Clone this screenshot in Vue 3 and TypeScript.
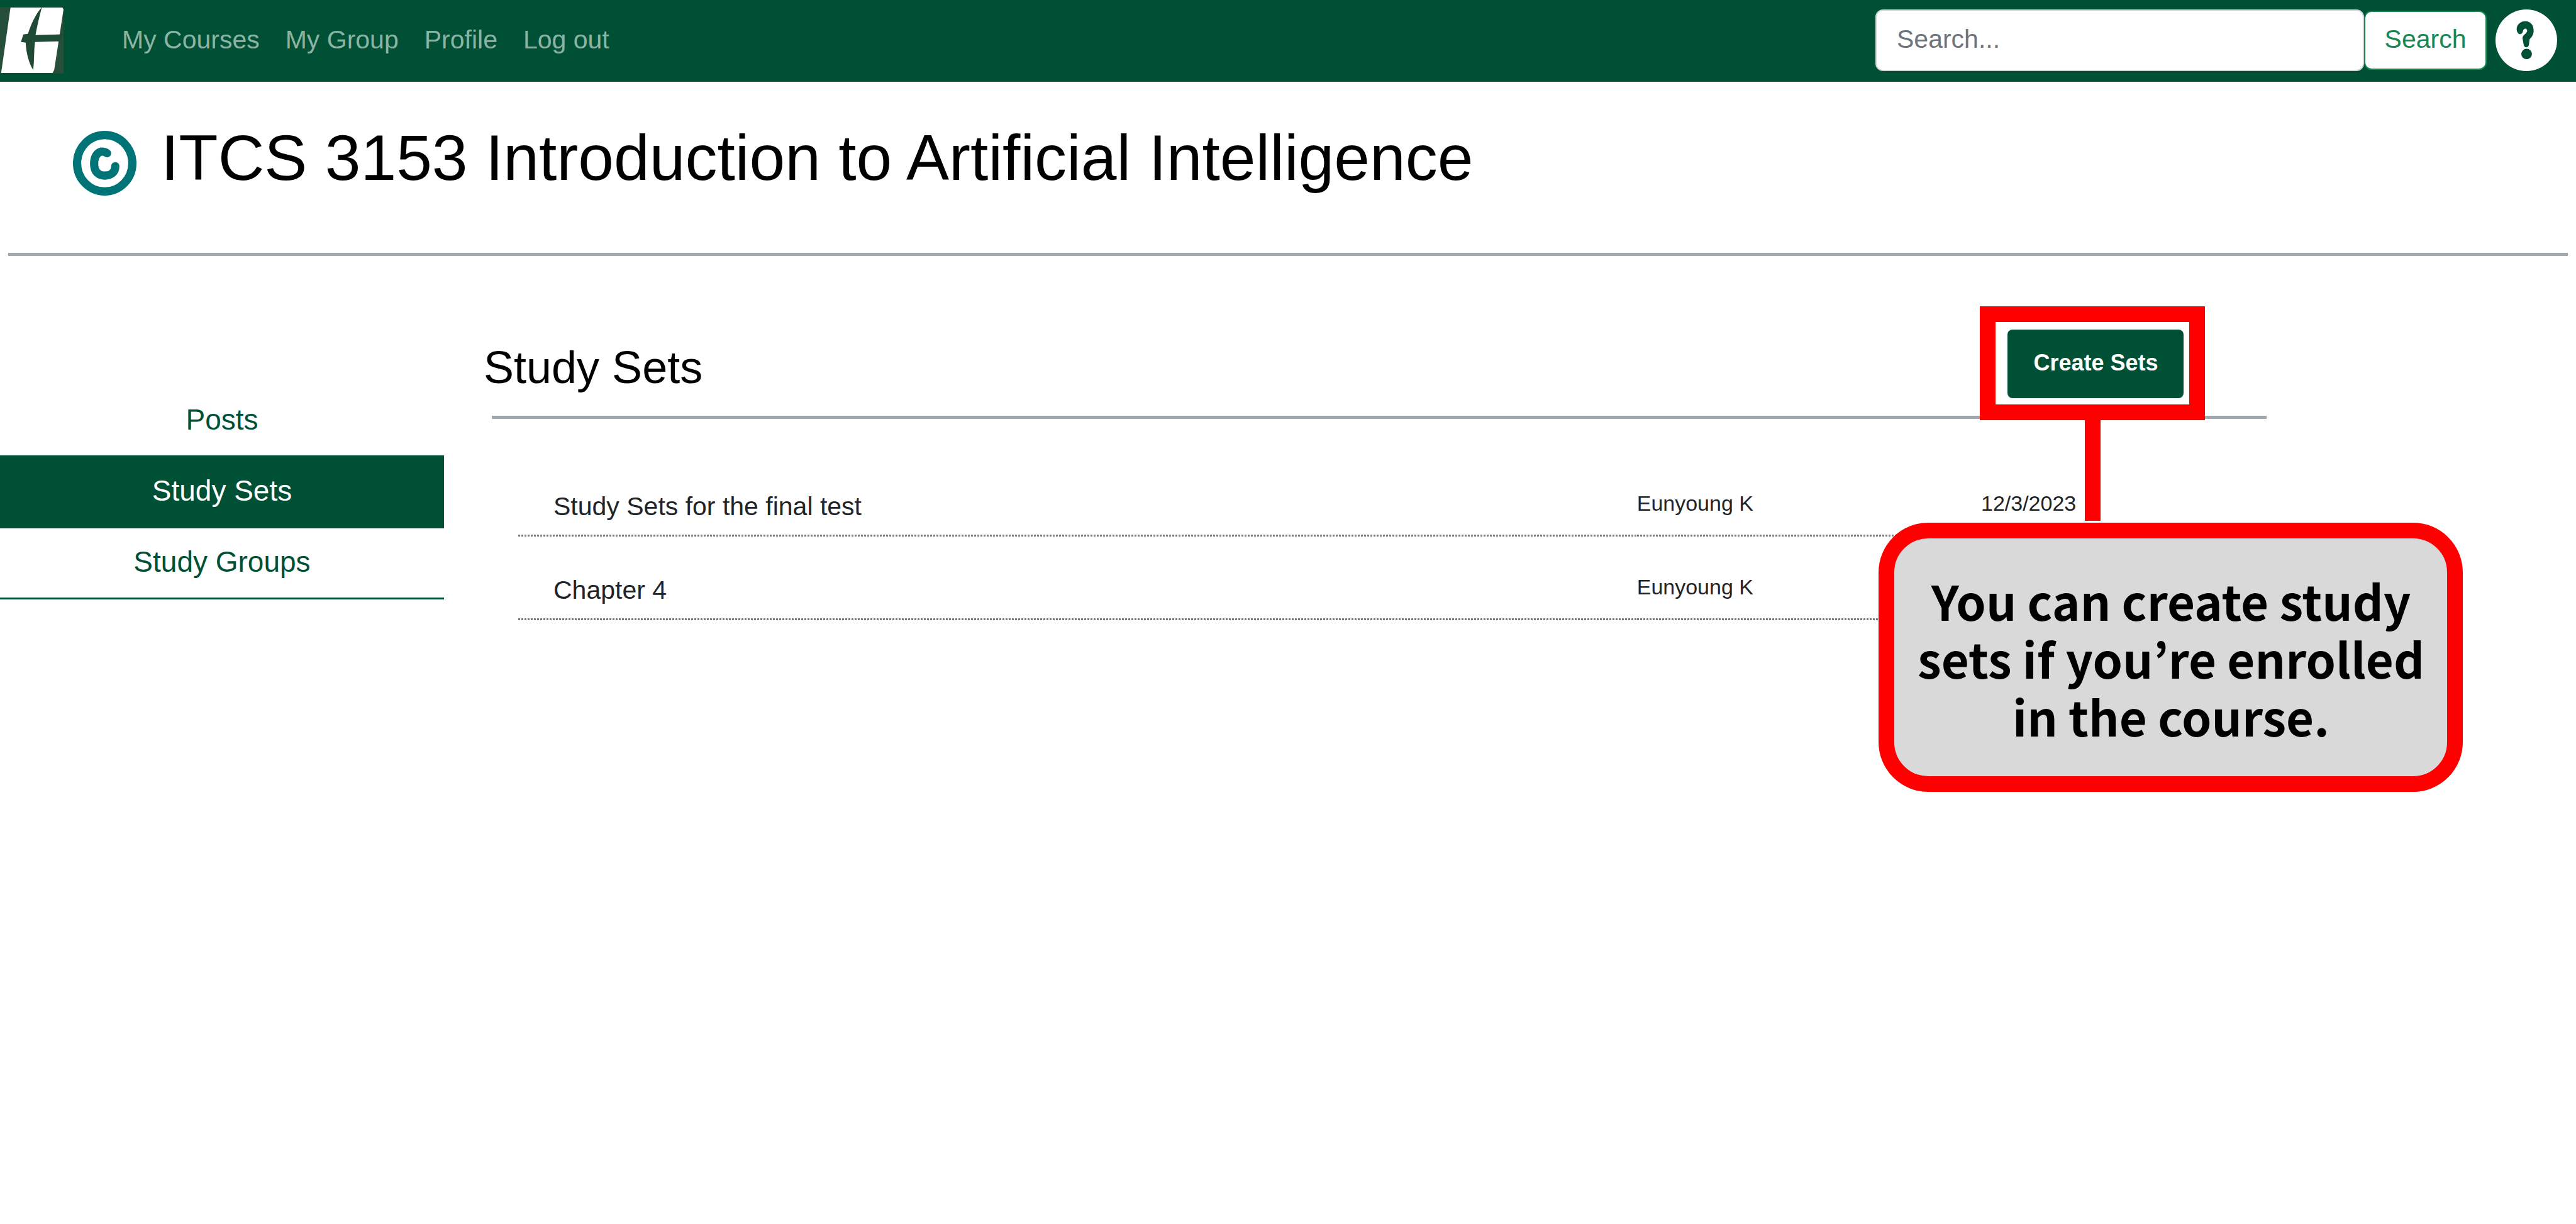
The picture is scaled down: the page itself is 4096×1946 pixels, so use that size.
<script setup lang="ts">
import { ref } from 'vue'

interface StudySet {
  title: string
  author: string
  date: string
}

const navLinks: string[] = ['My Courses', 'My Group', 'Profile', 'Log out']
const sections: string[] = ['Posts', 'Study Sets', 'Study Groups']
const activeSection = ref<string>('Study Sets')
const query = ref<string>('')

const studySets: StudySet[] = [
  { title: 'Study Sets for the final test', author: 'Eunyoung K', date: '12/3/2023' },
  { title: 'Chapter 4', author: 'Eunyoung K', date: '' },
]
</script>

<template>
  <div class="page">
    <header class="navbar">
      <a href="#" class="brand" aria-label="Home">
        <svg viewBox="0 0 109 114" aria-hidden="true">
          <rect width="109" height="114" fill="#254f3a" />
          <path d="M18 1H107L109 4L93 108L90 113H2Z" fill="#fff" />
          <path
            d="M72 0C61 12 53 30 48 46L40 47L36 60L44 61C45 80 50 97 57 108C59 92 58 76 60 60L99 59L103 60L109 46L102 47L61 48C64 32 67 18 72 0Z"
            fill="#1f4a36"
          />
        </svg>
      </a>
      <nav class="nav-links" aria-label="Main">
        <a v-for="link in navLinks" :key="link" href="#">{{ link }}</a>
      </nav>
      <form class="search" role="search" @submit.prevent>
        <input v-model="query" type="search" placeholder="Search..." aria-label="Search" />
        <button type="submit">Search</button>
      </form>
      <a href="#" class="help" aria-label="Help">
        <svg viewBox="0 0 105 105" aria-hidden="true">
          <circle cx="52.5" cy="52.5" r="52.5" fill="#fff" />
          <path
            d="M36 34C36 25 43 20 51 20C60 20 65 27 65 36C65 43 62 47 58 51L57 60C56 66 49 66 48 60L46 49C46 44 53 41 54 37C54 32 49 31 47 36C46 45 37 44 36 34Z"
            fill="#005035"
          />
          <circle cx="53" cy="76" r="9" fill="#005035" />
        </svg>
      </a>
    </header>

    <div class="course">
      <svg class="course-icon" viewBox="0 0 108 110" aria-hidden="true">
        <ellipse cx="54" cy="55" rx="47" ry="48" fill="none" stroke="#007377" stroke-width="14" />
        <path
          d="M58 38C46 30 36 40 36 56C36 70 44 76 54 76C65 76 72 70 72 60"
          fill="none"
          stroke="#007377"
          stroke-width="14"
          stroke-linecap="round"
        />
      </svg>
      <h1>ITCS 3153 Introduction to Artificial Intelligence</h1>
    </div>

    <div class="body">
      <nav class="sidebar" aria-label="Course sections">
        <a
          v-for="section in sections"
          :key="section"
          href="#"
          :class="{ active: section === activeSection }"
          @click.prevent="activeSection = section"
          >{{ section }}</a
        >
      </nav>

      <main class="content">
        <div class="content-head">
          <h2>Study Sets</h2>
          <div class="create">
            <button type="button">Create Sets</button>
            <span class="highlight"></span>
            <span class="connector"></span>
            <p class="callout">You can create study<br />sets if you’re enrolled<br />in the course.</p>
          </div>
        </div>
        <hr />
        <table>
          <tbody>
            <tr v-for="set in studySets" :key="set.title">
              <td class="title">{{ set.title }}</td>
              <td class="author">{{ set.author }}</td>
              <td class="date">{{ set.date }}</td>
            </tr>
          </tbody>
        </table>
      </main>
    </div>
  </div>
</template>

<style>
body {
  background: #fff;
}
</style>

<style scoped>
.page {
  min-height: 100vh;
  background: #fff;
  font-family: 'Liberation Sans', Arial, sans-serif;
  font-size: 41px;
  color: #212529;
}

.page *,
.page {
  box-sizing: border-box;
}

a {
  text-decoration: none;
}

button,
input {
  font: inherit;
  margin: 0;
}

svg {
  display: block;
  width: 100%;
  height: 100%;
}

.navbar {
  display: flex;
  align-items: center;
  height: 130px;
  padding: 0 30px 2px 0;
  background: #005035;
}

.brand {
  width: 101px;
  height: 106px;
}

.nav-links {
  display: flex;
  gap: 41px;
  margin-left: 93px;
  padding-bottom: 2px;
}

.nav-links a {
  line-height: 48px;
  color: #8cb4a4;
}

.search {
  display: flex;
  align-items: center;
  flex: 0 0 972px;
  margin-left: auto;
}

.search input {
  flex: 1;
  min-width: 0;
  height: 98px;
  padding: 0 32px 4px;
  border: 2px solid #ced4da;
  border-radius: 12px;
  background: #fff;
  color: #212529;
  appearance: none;
}

.search input::placeholder {
  color: #6c757d;
  opacity: 1;
}

.search button {
  width: 195px;
  height: 94px;
  padding: 0 0 4px;
  border: 2px solid #198754;
  border-radius: 12px;
  background: #fff;
  color: #198754;
}

.help {
  width: 98px;
  height: 98px;
  margin-left: 14px;
}

.course {
  display: flex;
  align-items: flex-end;
  gap: 39px;
  margin: 0 13px;
  padding: 61px 103px 91px;
  border-bottom: 5px solid #9fa8ad;
}

.course-icon {
  width: 101px;
  height: 103px;
}

h1,
h2 {
  margin: 0;
  font-weight: 400;
  color: #000;
}

h1 {
  font-size: 102px;
  line-height: 120px;
}

.body {
  display: flex;
  align-items: flex-start;
}

.sidebar {
  flex: 0 0 706px;
  margin-top: 207px;
}

.sidebar a {
  display: block;
  padding-bottom: 4px;
  border-bottom: 3px solid #005035;
  font-size: 46px;
  line-height: 106px;
  text-align: center;
  color: #005035;
}

.sidebar a.active {
  background: #005035;
  color: #fff;
}

.content {
  flex: 1;
  margin: 117px 12% 0 63px;
}

.content-head {
  display: flex;
  align-items: flex-start;
  justify-content: space-between;
  padding: 0 132px 28px 0;
}

h2 {
  margin-top: 17px;
  font-size: 72px;
  line-height: 86px;
}

.create {
  position: relative;
}

.create button {
  display: block;
  width: 280px;
  height: 109px;
  padding: 0 0 4px;
  border: 0;
  border-radius: 8px;
  background: #005035;
  color: #fff;
  font-size: 36px;
  font-weight: 700;
}

.highlight {
  position: absolute;
  inset: -37px -34px -35px -44px;
  border: 25px solid #f00;
}

.connector {
  position: absolute;
  top: 144px;
  left: 123px;
  width: 25px;
  height: 160px;
  background: #f00;
}

.callout {
  position: absolute;
  top: 307px;
  left: -205px;
  width: 929px;
  height: 428px;
  margin: 0;
  padding: 52px 0 0;
  border: 25px solid #f00;
  border-radius: 79px;
  background: #d9d9d9;
  color: #000;
  font-family: 'Noto Sans CJK KR', 'Noto Sans', sans-serif;
  font-size: 76px;
  font-weight: 700;
  line-height: 92px;
  text-align: center;
  white-space: nowrap;
}

hr {
  height: 5px;
  margin: 0 0 54px 13px;
  border: 0;
  background: #9fa8ad;
}

table {
  width: calc(100% - 99px);
  margin-left: 55px;
  border-collapse: collapse;
  table-layout: fixed;
}

td {
  height: 133px;
  padding: 55px 0 0;
  vertical-align: top;
  line-height: 50px;
  background: repeating-linear-gradient(90deg, #777 0 3px, transparent 3px 5px) bottom left / 100% 3px no-repeat;
}

.title {
  width: 65%;
  padding: 60px 0 0 56px;
}

.author {
  width: 20%;
  font-size: 34px;
}

.date {
  width: 15%;
  font-size: 34px;
}
</style>
